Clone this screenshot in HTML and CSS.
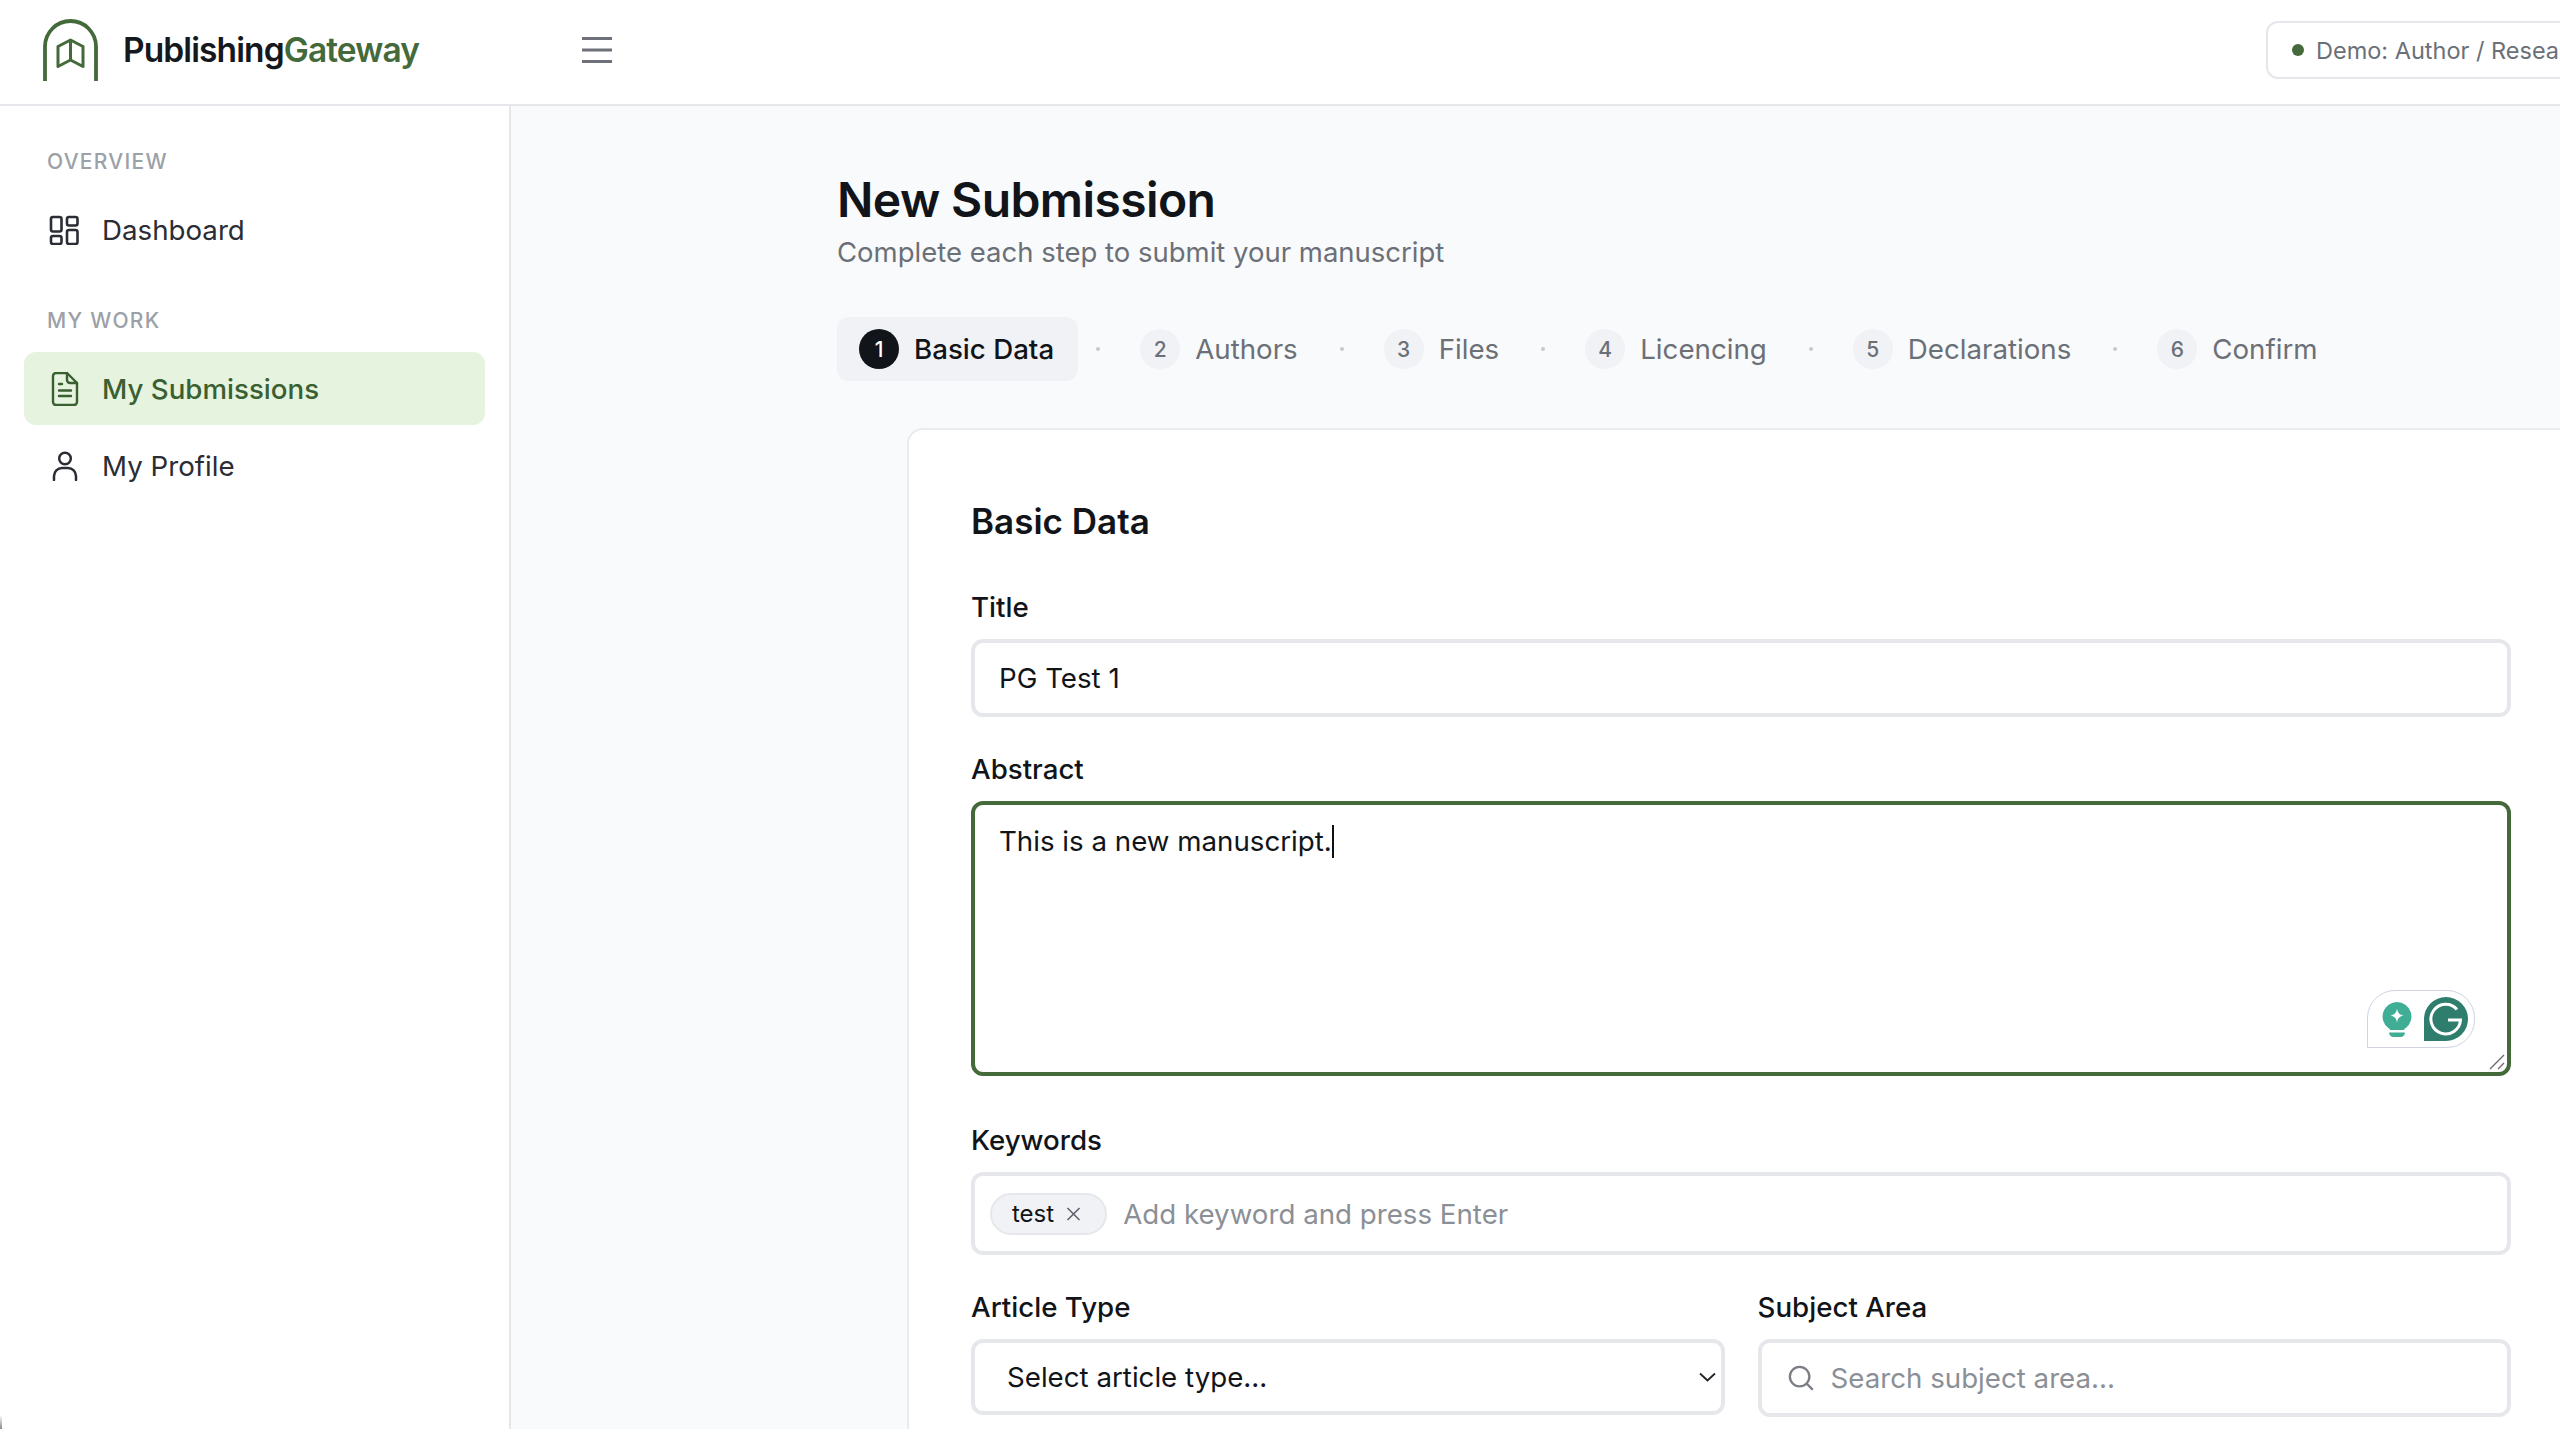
FILE: index.html
```html
<!DOCTYPE html>
<html lang="en">
<head>
<meta charset="utf-8">
<title>New Submission</title>
<link rel="stylesheet" href="styles.css">
</head>
<body>
<div class="app">
<header class="topbar">
  <div class="brand">
    <svg class="logo" viewBox="0 0 55 62" fill="none" stroke="#44693a" stroke-width="3.800"><path d="M2 62V27.500a25.500 25.500 0 0 1 51 0V62"/><path d="M15 27.500L27.500 21 40 27.500V47.500L27.500 41 15 47.500zM27.500 21V41" stroke-width="3" stroke-linejoin="round"/></svg>
    <span class="brand-name">Publishing<span class="brand-accent">Gateway</span></span>
  </div>
  <button class="burger" aria-label="Menu"><svg viewBox="0 0 30 26" fill="none" stroke="#6e7179" stroke-width="2.800"><path d="M0 1.500h30M0 13h30M0 24.500h30"/></svg></button>
  <div class="demo"><span class="dot"></span><span>Demo: Author / Researcher</span></div>
</header>
<div class="body">
<aside class="sidebar">
  <div class="nav-label first">OVERVIEW</div>
  <a class="nav-item"><svg class="nav-icon" viewBox="0 0 30 30" fill="none" stroke="currentColor" stroke-width="2.600" stroke-linejoin="round"><rect x="2" y="2" width="10.500" height="14.500" rx="2"/><rect x="18" y="2" width="10.500" height="8.500" rx="2"/><rect x="2" y="21" width="10.500" height="8" rx="2"/><rect x="18" y="15" width="10.500" height="14" rx="2"/></svg>Dashboard</a>
  <div class="nav-label">MY WORK</div>
  <a class="nav-item active"><svg class="nav-icon tall" viewBox="0 0 30 34" fill="none" stroke="currentColor" stroke-width="2.400" stroke-linecap="round" stroke-linejoin="round"><path d="M4 4a3 3 0 0 1 3-3h11l10 10v19a3 3 0 0 1-3 3H7a3 3 0 0 1-3-3z"/><path d="M18 1v7a3 3 0 0 0 3 3h7M10 12h3M10 18.500h12M10 24h12"/></svg>My Submissions</a>
  <a class="nav-item"><svg class="nav-icon" viewBox="0 0 30 30" fill="none" stroke="currentColor" stroke-width="2.500" stroke-linecap="round"><circle cx="16" cy="7.500" r="5.800"/><path d="M5 29v-4a8 8 0 0 1 8-8h6a8 8 0 0 1 8 8v4"/></svg>My Profile</a>
</aside>
<main class="main">
  <h1 class="page-title">New Submission</h1>
  <p class="page-sub">Complete each step to submit your manuscript</p>
  <ol class="steps">
    <li class="step current"><span class="num">1</span>Basic Data</li>
    <li class="sep"></li>
    <li class="step"><span class="num">2</span>Authors</li>
    <li class="sep"></li>
    <li class="step"><span class="num">3</span>Files</li>
    <li class="sep"></li>
    <li class="step"><span class="num">4</span>Licencing</li>
    <li class="sep"></li>
    <li class="step"><span class="num">5</span>Declarations</li>
    <li class="sep"></li>
    <li class="step"><span class="num">6</span>Confirm</li>
  </ol>
  <section class="card">
    <h2 class="card-title">Basic Data</h2>
    <label class="field-label">Title</label>
    <div class="input title-input">PG Test 1</div>
    <label class="field-label">Abstract</label>
    <div class="textarea"><span class="typed">This is a new manuscript.</span><span class="caret"></span>
      <div class="grammarly">
        <svg class="g-bulb" viewBox="0 0 30 35"><path d="M15 0a14.500 14.500 0 0 1 9 25.800c-1.500 1.200-2 1.700-2 2.200H8c0-.5-.5-1-2-2.200A14.500 14.500 0 0 1 15 0z" fill="#3fae94"/><path d="M15 6.500c.7 4.500 2.500 6.300 7 7-4.500.7-6.300 2.500-7 7-.7-4.500-2.500-6.300-7-7 4.500-.7 6.300-2.500 7-7z" fill="#fff"/><path d="M7 30.500h16c0 2.500-2 4.500-4.500 4.500h-7C9 35 7 33 7 30.500z" fill="#3fae94"/></svg>
        <svg class="g-logo" viewBox="0 0 44 44"><path d="M22 0a22 22 0 0 1 0 44H0V22A22 22 0 0 1 22 0z" fill="#2f7d6d"/><path d="M33 12.500A14.800 14.800 0 1 0 36.500 23H24" fill="none" stroke="#fff" stroke-width="3"/></svg>
      </div>
      <svg class="resize" viewBox="0 0 16 16" stroke="#6b6b6b" stroke-width="1.400"><path d="M1 15L15 1M9 15l6-6"/></svg>
    </div>
    <label class="field-label">Keywords</label>
    <div class="input keywords"><span class="tag">test<svg class="tag-x" viewBox="0 0 15 14" stroke="#5f636b" stroke-width="1.600"><path d="M1.500 1l12 12M13.500 1l-12 12"/></svg></span><span class="placeholder">Add keyword and press Enter</span></div>
    <div class="row">
      <div class="col">
        <label class="field-label">Article Type</label>
        <div class="input select"><span>Select article type...</span><svg class="chev" viewBox="0 0 17 10" fill="none" stroke="#222" stroke-width="1.800"><path d="M1 1.500l7.500 7 7.500-7"/></svg></div>
      </div>
      <div class="col">
        <label class="field-label">Subject Area</label>
        <div class="input search"><svg class="search-icon" viewBox="0 0 28 28" fill="none" stroke="#7b7e85" stroke-width="2.500" stroke-linecap="round"><circle cx="12.500" cy="12.500" r="10.500"/><path d="M20.500 20.500L26 26"/></svg><span class="placeholder">Search subject area...</span></div>
      </div>
    </div>
  </section>
</main>
</div>
</div>
<span class="edge-mark"></span>
</body>
</html>
```
FILE: styles.css
```css
* { box-sizing: border-box; }
html, body { margin: 0; height: 100%; background: #fff; overflow: hidden; }
body { font-family: Inter, "Liberation Sans", sans-serif; color: #111418; }
.app { width: 2560px; height: 1429px; display: flex; flex-direction: column; overflow: hidden; }
.topbar { height: 106px; flex: none; display: flex; align-items: center; background: #fff; border-bottom: 2px solid #e5e7eb; position: relative; padding: 0 0 4px 43px; }
.brand { display: flex; align-items: center; gap: 25px; width: 537px; height: 62px; }
.logo { width: 55px; height: 62px; flex: none; }
.brand-name { font-size: 33.500px; font-weight: 600; letter-spacing: -0.9px; color: #15181c; }
.brand-accent { color: #44693a; }
.burger { width: 34px; height: 30px; border: 0; padding: 2px; background: none; display: flex; }
.burger svg { width: 30px; height: 26px; }
.demo { position: absolute; left: 2266px; top: 21px; width: 340px; height: 58px; border: 2px solid #e5e7eb; border-radius: 12px; display: flex; align-items: center; gap: 12px; padding-left: 24px; font-size: 23.500px; color: #6b7078; white-space: nowrap; }
.dot { width: 12px; height: 12px; border-radius: 50%; background: #44693a; flex: none; }
.body { flex: 1; display: flex; min-height: 0; }
.sidebar { width: 511px; flex: none; background: #fff; border-right: 2px solid #e5e7eb; padding: 43px 24px 0; }
.nav-label { font-size: 21px; font-weight: 500; letter-spacing: 1.3px; color: #9ca0a7; padding-left: 23px; margin: 42px 0 18px; line-height: 26px; }
.nav-label.first { margin-top: 0; }
.nav-item { display: flex; align-items: center; gap: 23px; height: 73px; padding-left: 25px; font-size: 27.700px; color: #2a2d33; border-radius: 12px; margin-bottom: 4px; }
.nav-item.active { background: #e5f3df; color: #3a5f30; font-weight: 500; }
.nav-icon { width: 30px; height: 30px; flex: none; }
.nav-icon.tall { height: 34px; }
.main { flex: 1; min-width: 0; background: #f9fafb; padding: 64px 0 0 326px; overflow: hidden; }
.page-title { margin: 0; font-size: 48px; font-weight: 600; line-height: 60px; letter-spacing: -0.6px; }
.page-sub { margin: 4px 0 0; font-size: 27.500px; line-height: 36px; color: #6b7078; }
.steps { list-style: none; margin: 47px 0 0; padding: 0; display: flex; align-items: center; gap: 18px; }
.step { display: flex; align-items: center; gap: 15px; height: 64px; padding: 0 24px 0 22px; border-radius: 12px; font-size: 27.700px; color: #6b7078; white-space: nowrap; }
.step.current { background: #f1f2f5; color: #111418; font-weight: 500; }
.num { width: 40px; height: 40px; border-radius: 50%; background: #f1f2f5; display: flex; align-items: center; justify-content: center; font-size: 21px; font-weight: 500; }
.current .num { background: #111418; color: #fff; }
.sep { width: 4px; height: 4px; border-radius: 50%; background: #c6c9ce; flex: none; }
.card { margin: 47px 0 0 70px; width: 1700px; height: 1400px; background: #fff; border: 2px solid #e9ebee; border-radius: 16px; padding: 69px 0 0 62px; }
.card-title { margin: 0; font-size: 35px; font-weight: 600; line-height: 44px; }
.field-label { display: block; font-size: 27.700px; font-weight: 500; line-height: 36px; margin-bottom: 14px; }
.card-title + .field-label { margin-top: 46px; }
.input { height: 78px; border: 4px solid #e5e7eb; border-radius: 12px; background: #fff; display: flex; align-items: center; padding: 0 24px; font-size: 27.700px; width: 1540px; }
.title-input { margin-bottom: 34px; }
.textarea { position: relative; width: 1540px; height: 275px; border: 4px solid #44693a; border-radius: 12px; padding: 18px 24px; font-size: 27.700px; line-height: 36px; margin-bottom: 46px; }
.caret { display: inline-block; width: 2px; height: 33px; background: #111; vertical-align: -7px; }
.grammarly { position: absolute; right: 32px; bottom: 24px; width: 108px; height: 58px; border: 1.500px solid #cfd3e3; border-radius: 28px 28px 28px 0; background: #fff; display: flex; align-items: center; justify-content: flex-end; gap: 12px; padding-right: 6px; }
.g-bulb { width: 30px; height: 35px; }
.g-logo { width: 44px; height: 44px; }
.resize { position: absolute; right: 2px; bottom: 2px; width: 16px; height: 16px; }
.keywords { height: 83px; padding: 0 15px; gap: 16px; margin-bottom: 34px; }
.tag { display: flex; align-items: center; gap: 12px; height: 42px; padding: 0 24px 0 20px; background: #f1f2f5; border: 2px solid #e5e7eb; border-radius: 21px; font-size: 24px; }
.tag-x { width: 15px; height: 14px; }
.placeholder { color: #8b8f96; }
.row { display: flex; gap: 33px; width: 1540px; align-items: flex-start; }
.col { flex: 1; min-width: 0; }
.col .input { width: 100%; }
.select { height: 76px; justify-content: space-between; padding: 0 5px 0 32px; }
.chev { width: 17px; height: 10px; }
.search { gap: 16px; padding-left: 25px; }
.search-icon { width: 28px; height: 26px; flex: none; }
.edge-mark { position: absolute; left: 0; top: 1415px; width: 2px; height: 14px; background: linear-gradient(#fff, #8a8a8a); }
```
